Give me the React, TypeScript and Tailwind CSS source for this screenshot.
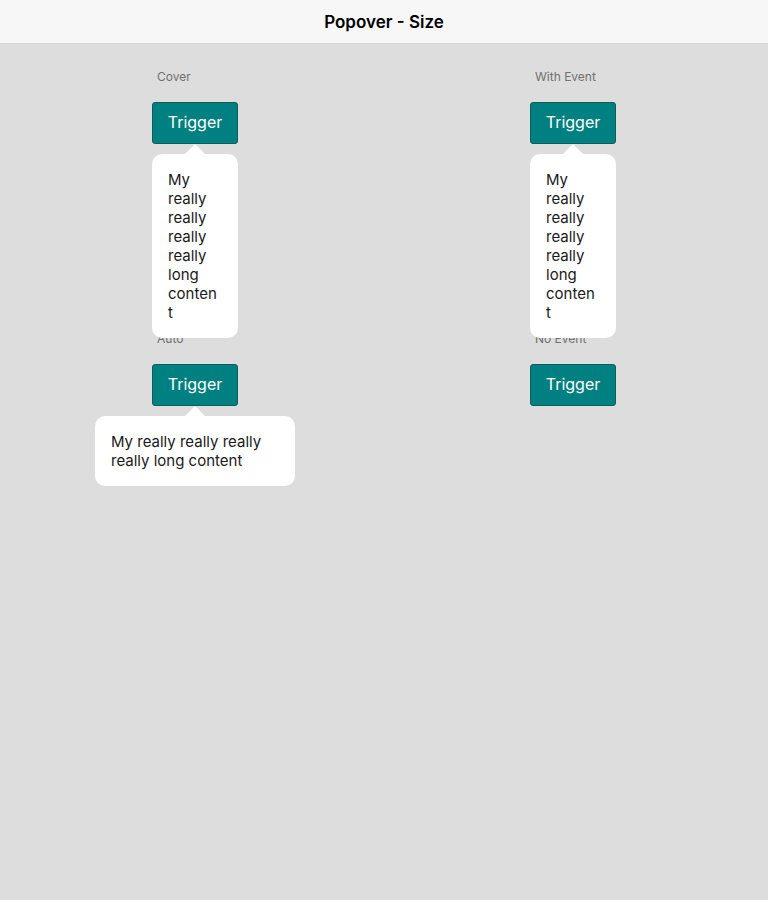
import React from "react";

const text = "My really really really really long content";

const Arrow = () => (
    <svg width="20" height="10" viewBox="0 0 20 10" className="absolute -top-[10px] left-1/2 -translate-x-1/2">
        <path d="M0 10 L10 0 L20 10 Z" fill="#ffffff" />
    </svg>
);

const Popover = ({ wide }: { wide?: boolean }) => (
    <div
        className={
            "absolute top-[52px] z-10 rounded-[10px] bg-white py-4 pl-4 text-[15px] leading-[19px] text-[#1a1a1a] break-words " +
            (wide ? "left-[-57px] w-[200px] pr-4" : "left-0 w-[86px] pr-[18px]")
        }
    >
        <Arrow />
        {text}
    </div>
);

const Cell = ({ label, open, wide }: { label: string; open: boolean; wide?: boolean }) => (
    <div className="h-[262px]">
        <div className="pl-[5px] text-[12px] leading-4 text-[#707070]">{label}</div>
        <div className="relative mt-[17px] w-[86px]">
            <button className="h-[42px] w-[86px] rounded-[3px] border border-[#0b5c5c] bg-[#008080] pb-[2px] text-[16px] text-white">
                Trigger
            </button>
            {open && <Popover wide={wide} />}
        </div>
    </div>
);

export default function App() {
    return (
        <div className="min-h-[900px] bg-[#dddddd]" style={{ fontFamily: "Inter, Roboto, sans-serif" }}>
            <header className="flex h-[44px] items-center justify-center border-b border-[#d4d4d4] bg-[#f7f7f7] pt-[2px]">
                <h1 className="text-[17px] font-semibold text-black">Popover - Size</h1>
            </header>
            <div className="grid grid-cols-[378px_auto] pl-[152px] pt-[25px]">
                <Cell label="Cover" open />
                <Cell label="With Event" open />
                <Cell label="Auto" open wide />
                <Cell label="No Event" open={false} />
            </div>
        </div>
    );
}
